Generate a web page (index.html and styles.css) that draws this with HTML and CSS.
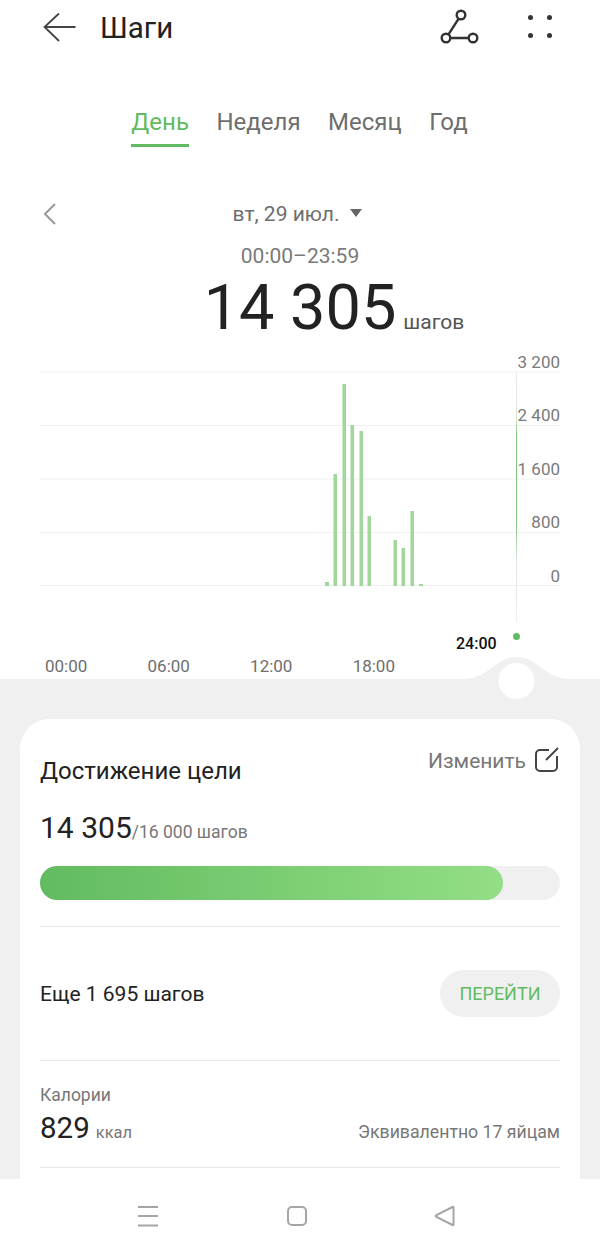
FILE: index.html
```html
<!DOCTYPE html>
<html lang="ru">

<head>
    <meta charset="UTF-8">
    <meta name="viewport" content="width=device-width, initial-scale=1.0">
    <title>Шаги</title>
    <link rel="stylesheet" href="styles.css">
</head>

<body>
    <div class="main">
        <div class="top">
            <header class="header">
                <svg class="back-icon" width="36" height="32" viewBox="0 0 36 32">
                    <path d="M33.500 15H2.500M17 1.500L2.500 15L17 29" />
                </svg>
                <h1>Шаги</h1>
                <svg class="route-icon" width="40" height="44" viewBox="0 0 40 44">
                    <circle cx="21" cy="9" r="4.300" />
                    <circle cx="6" cy="32" r="4.300" />
                    <circle cx="33" cy="32" r="4.300" />
                    <path d="M18.500 12.800L8.500 28.300M10.500 32H28.500" />
                </svg>
                <div class="dots">
                    <span></span><span></span><span></span><span></span>
                </div>
            </header>

            <nav class="tabs">
                <a class="tab active">День</a>
                <a class="tab">Неделя</a>
                <a class="tab">Месяц</a>
                <a class="tab">Год</a>
            </nav>

            <div class="date-row">
                <svg class="chevron" width="14" height="24" viewBox="0 0 14 24">
                    <path d="M12 2L2 12L12 22" />
                </svg>
                <span class="date">вт, 29 июл.</span>
                <span class="caret"></span>
            </div>

            <div class="range">00:00–23:59</div>
            <div class="total"><span class="total-num">14 305</span><span class="total-unit">шагов</span></div>

            <div class="chart">
                <svg class="plot" width="600" height="329" viewBox="0 0 600 329">
                    <defs>
                        <linearGradient id="cursor" x1="0" y1="0" x2="0" y2="1">
                            <stop offset="0" stop-color="#ececec" />
                            <stop offset="0.18" stop-color="#d8e8d6" />
                            <stop offset="0.25" stop-color="#7fc47c" />
                            <stop offset="0.6" stop-color="#7fc47c" />
                            <stop offset="0.75" stop-color="#dce8dc" />
                            <stop offset="1" stop-color="#eeeeee" />
                        </linearGradient>
                    </defs>
                    <g class="grid">
                        <path d="M40 22H560M40 75.500H560M40 129H560M40 182.500H560M40 235.500H560" />
                    </g>
                    <g class="bars">
                        <rect x="325" y="232" width="4" height="4" />
                        <rect x="333.500" y="124" width="3.500" height="112" />
                        <rect x="342.500" y="34" width="3.500" height="202" />
                        <rect x="350.500" y="75" width="3.500" height="161" />
                        <rect x="359.500" y="81" width="3.500" height="155" />
                        <rect x="367.500" y="166" width="3.500" height="70" />
                        <rect x="393.500" y="190" width="3.500" height="46" />
                        <rect x="401.500" y="198" width="3.500" height="38" />
                        <rect x="410.500" y="161" width="3.500" height="75" />
                        <rect x="419" y="234" width="4" height="2" />
                    </g>
                    <rect x="516" y="22" width="1" height="250" fill="url(#cursor)" />
                    <circle cx="516.500" cy="286.500" r="3.500" fill="#62bb60" />
                    <path class="bump" d="M462 329C490 329 494 307 516.500 307C539 307 543 329 571 329Z" />
                    <circle cx="516.500" cy="331" r="18" fill="#fff" />
                </svg>

                <div class="y-labels">
                    <span>3 200</span>
                    <span>2 400</span>
                    <span>1 600</span>
                    <span>800</span>
                    <span>0</span>
                </div>

                <div class="now-label">24:00</div>

                <div class="x-labels">
                    <span>00:00</span>
                    <span>06:00</span>
                    <span>12:00</span>
                    <span>18:00</span>
                </div>
            </div>
        </div>

        <div class="card">
            <div class="goal-head">
                <h2>Достижение цели</h2>
                <a class="edit">
                    Изменить
                    <svg width="24" height="26" viewBox="0 0 24 26">
                        <path d="M14 3H5A4 4 0 0 0 1 7V20A4 4 0 0 0 5 24H18A4 4 0 0 0 22 20V9" />
                        <path d="M23 1L11 13" />
                    </svg>
                </a>
            </div>

            <div class="goal-value"><span class="big">14 305</span><span class="goal-of">/16 000 шагов</span></div>

            <div class="progress">
                <div class="progress-fill" style="width: 89%"></div>
            </div>

            <div class="row remain">
                <span>Еще 1 695 шагов</span>
                <a class="go">ПЕРЕЙТИ</a>
            </div>

            <div class="calories">
                <div class="cal-title">Калории</div>
                <div class="cal-line">
                    <span><span class="cal-num">829</span><span class="cal-unit">ккал</span></span>
                    <span class="cal-note">Эквивалентно 17 яйцам</span>
                </div>
            </div>
        </div>
    </div>

    <footer class="navbar">
        <svg width="22" height="22" viewBox="0 0 22 22">
            <path d="M1 2H21M1 11H21M1 20.500H21" />
        </svg>
        <svg width="22" height="22" viewBox="0 0 22 22">
            <rect x="2" y="2" width="18" height="18" rx="4" />
        </svg>
        <svg class="nav-back" width="22" height="22" viewBox="0 0 22 22">
            <path d="M19.500 2.500V19.500Q19.500 20.500 18.500 20L2.500 12Q1 11 2.500 10L18.500 2Q19.500 1.500 19.500 2.500Z" />
        </svg>
    </footer>
</body>

</html>
```

FILE: styles.css
```css
* {
    box-sizing: border-box;
}

body {
    margin: 0;
    width: 600px;
    height: 1252px;
    display: flex;
    flex-direction: column;
    overflow: hidden;
    font-family: Roboto, 'Noto Sans', sans-serif;
    color: #222;
    background-color: #f0f0f0;
}

.main {
    flex: 1;
    overflow: hidden;
}

.top {
    height: 679px;
    background-color: white;
}

/* header */
.header {
    height: 56px;
    display: flex;
    align-items: center;
    padding-left: 42px;
}

.header svg {
    fill: none;
    stroke: #333;
    stroke-width: 2.4;
}

.header .back-icon {
    stroke: #444;
    stroke-width: 1.8;
}

.header h1 {
    margin: 0 0 0 22px;
    flex: 1;
    font-size: 29.500px;
    font-weight: 400;
    color: #222;
}

.route-icon {
    margin-right: 47.500px;
}

.dots {
    display: grid;
    grid-template-columns: 5px 5px;
    gap: 13px 14px;
    margin-right: 48.500px;
    margin-bottom: 4px;
}

.dots span {
    width: 5px;
    height: 5px;
    border-radius: 50%;
    background-color: #333;
}

/* tabs */
.tabs {
    display: flex;
    justify-content: center;
    gap: 27.500px;
    margin-top: 47px;
    padding-right: 1px;
    font-size: 24px;
    color: #6e6e6e;
}

.tab {
    height: 44px;
    line-height: 39px;
}

.tab.active {
    color: #62bb60;
    border-bottom: 3px solid #62bb60;
}

/* date */
.date-row {
    position: relative;
    display: flex;
    justify-content: center;
    align-items: center;
    gap: 11px;
    height: 30px;
    margin-top: 52px;
    padding-right: 5px;
    font-size: 21px;
    color: #6e6e6e;
}

.chevron {
    position: absolute;
    left: 43px;
    top: 3px;
    fill: none;
    stroke: #999;
    stroke-width: 2;
}

.caret {
    width: 0;
    height: 0;
    margin-top: -3px;
    border-left: 6px solid transparent;
    border-right: 6px solid transparent;
    border-top: 8px solid #666;
}

.range {
    margin-top: 14px;
    text-align: center;
    font-size: 21px;
    line-height: 26px;
    color: #7a7a7a;
}

.total {
    display: flex;
    justify-content: center;
    align-items: baseline;
    gap: 7px;
    height: 62px;
    margin: 8px 0 11px;
    padding-left: 68px;
}

.total-num {
    font-size: 63px;
    line-height: 62px;
    color: #222;
}

.total-unit {
    font-size: 21px;
    color: #555;
}

/* chart */
.chart {
    position: relative;
    z-index: 1;
    height: 329px;
}

.plot {
    position: absolute;
    left: 0;
    top: 0;
    overflow: visible;
}

.grid path {
    stroke: #f0f0f0;
    stroke-width: 1;
    fill: none;
}

.bars rect {
    fill: #a0d89c;
}

.bump {
    fill: #f0f0f0;
}

.y-labels {
    position: absolute;
    right: 40px;
    top: 2px;
    display: flex;
    flex-direction: column;
    align-items: flex-end;
    gap: 33.400px;
    font-size: 17px;
    line-height: 20px;
    color: #7a7a7a;
}

.now-label {
    position: absolute;
    left: 456px;
    top: 284px;
    font-size: 16px;
    font-weight: 500;
    line-height: 20px;
    color: #111;
}

.x-labels {
    position: absolute;
    left: 45px;
    top: 306px;
    width: 350px;
    display: flex;
    justify-content: space-between;
    font-size: 17px;
    line-height: 20px;
    color: #6e6e6e;
}

/* card */
.card {
    margin: 40px 20px 0;
    padding: 0 20px;
    height: 480px;
    background-color: white;
    border-radius: 30px 30px 0 0;
}

.goal-head {
    display: flex;
    justify-content: space-between;
    height: 92px;
    padding-top: 28px;
}

.goal-head h2 {
    margin: 10px 0 0;
    font-size: 24px;
    font-weight: 400;
    line-height: 28px;
    color: #222;
}

.edit {
    display: flex;
    align-items: center;
    gap: 9px;
    height: 28px;
    font-size: 21px;
    color: #777;
}

.edit svg {
    align-self: flex-start;
    margin-right: 1px;
    fill: none;
    stroke: #444;
    stroke-width: 2;
}

.goal-value {
    height: 55px;
    line-height: 34px;
}

.big {
    font-size: 30px;
    color: #222;
}

.goal-of {
    font-size: 17.500px;
    color: #777;
}

.progress {
    height: 34px;
    border-radius: 17px;
    background-color: #f0f0f0;
}

.progress-fill {
    height: 100%;
    border-radius: 17px;
    background: linear-gradient(to right, #62bb60, #93de86);
}

.row {
    display: flex;
    justify-content: space-between;
    align-items: center;
}

.remain {
    height: 135px;
    margin-top: 26px;
    border-top: 1px solid #e6e6e6;
    border-bottom: 1px solid #e6e6e6;
    font-size: 21px;
    color: #222;
}

.go {
    width: 120px;
    height: 47px;
    border-radius: 24px;
    background-color: #f0f0f0;
    text-align: center;
    line-height: 47px;
    font-size: 18px;
    color: #62bb60;
}

.calories {
    height: 107px;
    padding-top: 24px;
    border-bottom: 1px solid #e6e6e6;
}

.cal-title {
    font-size: 17.500px;
    line-height: 20px;
    color: #777;
}

.cal-line {
    display: flex;
    justify-content: space-between;
    align-items: baseline;
    margin-top: 4px;
    line-height: 38px;
}

.cal-num {
    font-size: 29.500px;
    color: #222;
}

.cal-unit {
    margin-left: 6px;
    font-size: 16.500px;
    color: #777;
}

.cal-note {
    font-size: 17.700px;
    color: #777;
}

/* bottom bar */
.navbar {
    height: 73px;
    display: flex;
    justify-content: center;
    align-items: flex-start;
    gap: 127px;
    padding: 26px 7px 0 0;
    background-color: white;
}

.navbar svg {
    fill: none;
    stroke: #a5a5a5;
    stroke-width: 2;
}

.nav-back {
    margin-left: -1px;
}
```
